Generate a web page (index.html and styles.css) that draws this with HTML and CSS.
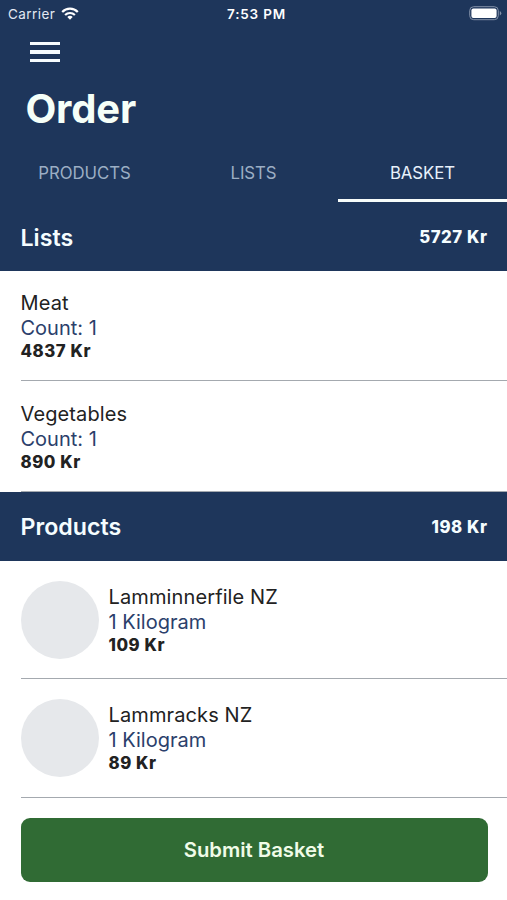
FILE: index.html
```html
<!DOCTYPE html>
<html lang="en">
<head>
<meta charset="utf-8">
<title>Order</title>
<link rel="stylesheet" href="styles.css">
</head>
<body>
<header class="top">
  <div class="status">
    <div class="carrier"><span class="carrier-name">Carrier</span>
      <svg class="wifi" width="18" height="13" viewBox="0 0 18 13" fill="none" stroke="#fff" stroke-width="2.2"><path d="M1.2 5C5.6.5 12.4.5 16.8 5"/><path d="M4.1 8C6.9 5.3 11.1 5.3 13.9 8"/><path d="M6.3 9.9C7.8 8.5 10.2 8.5 11.7 9.9L9 12.7Z" fill="#fff" stroke="none"/></svg>
    </div>
    <span class="clock">7:53 PM</span>
    <svg class="battery" width="33" height="15" viewBox="0 0 33 15"><rect x=".7" y=".7" width="28.6" height="13" rx="4" fill="none" stroke="#8391a8"/><rect x="2.4" y="2.4" width="25.2" height="9.6" rx="2" fill="#fff"/><path d="M30.8 5v4.4q1.5-.7 1.5-2.2T30.8 5z" fill="#8391a8"/></svg>
  </div>
  <button class="menu" aria-label="Menu"><i></i><i></i><i></i></button>
  <h1><span>Order</span></h1>
  <nav class="tabs">
    <a><span class="t-products">PRODUCTS</span></a>
    <a><span class="t-lists">LISTS</span></a>
    <a class="active"><span class="t-basket">BASKET</span></a>
  </nav>
</header>
<main>
  <section>
    <div class="section-head"><h2>Lists</h2><b>5727 Kr</b></div>
    <article class="row list"><div class="info"><p class="name">Meat</p><p class="qty">Count: 1</p><p class="price">4837 Kr</p></div></article>
    <article class="row list"><div class="info"><p class="name">Vegetables</p><p class="qty">Count: 1</p><p class="price">890 Kr</p></div></article>
  </section>
  <section>
    <div class="section-head products-head"><h2>Products</h2><b>198 Kr</b></div>
    <article class="row product"><div class="avatar"></div><div class="info"><p class="name">Lamminnerfile NZ</p><p class="qty">1 Kilogram</p><p class="price">109 Kr</p></div></article>
    <article class="row product"><div class="avatar"></div><div class="info"><p class="name">Lammracks NZ</p><p class="qty">1 Kilogram</p><p class="price">89 Kr</p></div></article>
  </section>
  <button class="submit">Submit Basket</button>
</main>
</body>
</html>
```
FILE: styles.css
```css
* { box-sizing: border-box; margin: 0; padding: 0; }
body { background: #fff; color: #222; font-family: Inter, "Liberation Sans", sans-serif; height: 900px; overflow: hidden; }
button { border: 0; font: inherit; }
.top { background: #1e365b; color: #fff; height: 203px; }
.status { height: 27px; display: grid; grid-template-columns: 1fr auto 1fr; align-items: center; padding: 0 5px 0 8px; font-size: 13.5px; }
.carrier { display: flex; align-items: center; gap: 6px; color: #e2e9f2; letter-spacing: .45px; }
.clock { font-weight: 600; font-size: 13.5px; letter-spacing: .8px; margin-left: 3px; }
.battery { justify-self: end; }
.menu { display: flex; flex-direction: column; gap: 5px; background: none; width: 30px; margin: 15px 0 0 30px; }
.menu i { height: 3.3px; background: #f7fcff; }
h1 { font-size: 40px; line-height: 48px; font-weight: 700; letter-spacing: -.2px; margin: 23px 0 0 25.5px; color: #f5fff8; }
.tabs { display: grid; grid-template-columns: repeat(3, 1fr); margin-top: 9px; height: 60px; }
.tabs a { display: flex; align-items: center; justify-content: center; padding-top: 5px; border-bottom: 3px solid transparent; font-size: 16.8px; letter-spacing: -.05px; color: #9caec4; }
.tabs .active { color: #e8f1fb; border-color: #f7fcfa; }
.section-head { background: #1e365b; color: #f5fdff; height: 67.5px; padding: 0 20px 0 20.5px; display: flex; align-items: center; justify-content: space-between; }
.products-head { height: 68.5px; }
h2 { font-size: 23.2px; line-height: 30px; font-weight: 600; padding-top: 2px; }
.section-head b, .price { font-size: 16.8px; font-weight: 800; line-height: 20px; letter-spacing: .55px; }
.section-head b { margin-right: -.5px; padding-top: 1px; }
.row { margin-left: 20.5px; border-bottom: 1px solid #a4a9af; display: flex; align-items: center; gap: 10px; }
.list { height: 110.75px; padding-top: 1px; }
.product { height: 118.5px; padding-top: 1.5px; }
.product + .product { padding-top: .5px; }
.name, .qty { font-size: 20px; line-height: 25px; }
.name { letter-spacing: .12px; }
.qty { color: #2b406b; }
.avatar { width: 78px; height: 78px; border-radius: 50%; background: #e6e8eb; }
.submit { display: block; width: 467px; height: 64px; margin: 20.5px 0 0 20.5px; padding-bottom: 1px; border-radius: 9px; background: #306b34; color: #f0fce8; font-size: 20.3px; font-weight: 600; }
```
